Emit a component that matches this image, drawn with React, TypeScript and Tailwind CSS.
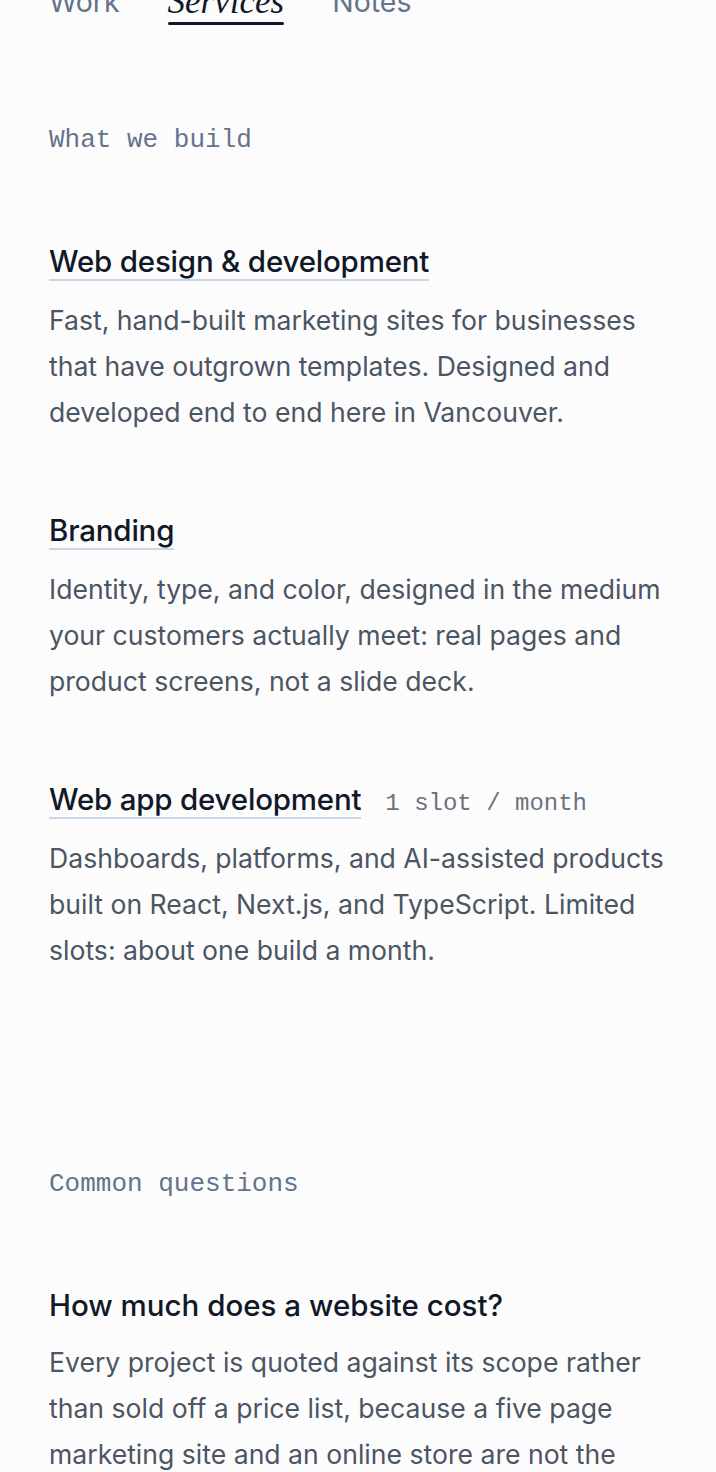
import React from "react";

const sans = "font-['Inter','Noto_Sans',sans-serif]";
const mono = "font-['Liberation_Mono','DejaVu_Sans_Mono',monospace]";

function NavItem({ label, active }: { label: string; active?: boolean }) {
  return (
    <div className="flex flex-col">
      <span
        className={
          active
            ? "font-['Liberation_Serif',serif] italic text-[35px] leading-[36px] text-[#111827]"
            : `${sans} text-[28.5px] leading-[36px] text-[#64748b]`
        }
      >
        {label}
      </span>
      <div className={`mt-[2px] h-[3px] rounded-full ${active ? "bg-[#111827]" : "bg-transparent"}`} />
    </div>
  );
}

function Service({ title, tag, body, first }: { title: string; tag?: string; body: string; first?: boolean }) {
  return (
    <div className={first ? "mt-[85px]" : "mt-[77px]"}>
      <div className="flex items-baseline gap-[24px]">
        <h3 className={`${sans} inline-block border-b-2 border-[#c9d7e6] text-[29.5px] leading-[36px] font-medium text-[#111827] tracking-[-0.2px]`}>
          {title}
        </h3>
        {tag && <span className={`${mono} text-[24px] leading-none text-[#6b7280]`}>{tag}</span>}
      </div>
      <p className={`${sans} mt-[16px] text-[26.6px] leading-[46px] text-[#4b5563]`}>{body}</p>
    </div>
  );
}

export default function App() {
  return (
    <div className="min-h-screen bg-[#fcfcfc] overflow-hidden">
      <div className="px-[49px] pr-[40px]">
        <nav className="-mt-[16px] flex items-start gap-[48px]">
          <NavItem label="Work" />
          <NavItem label="Services" active />
          <NavItem label="Notes" />
        </nav>

        <section>
          <div className={`${mono} mt-[97px] text-[26px] leading-[36px] text-[#64748b]`}>What we build</div>
          <Service
            first
            title="Web design & development"
            body="Fast, hand-built marketing sites for businesses that have outgrown templates. Designed and developed end to end here in Vancouver."
          />
          <Service
            title="Branding"
            body="Identity, type, and color, designed in the medium your customers actually meet: real pages and product screens, not a slide deck."
          />
          <Service
            title="Web app development"
            tag="1 slot / month"
            body="Dashboards, platforms, and AI-assisted products built on React, Next.js, and TypeScript. Limited slots: about one build a month."
          />
        </section>

        <section>
          <div className={`${mono} mt-[193px] text-[26px] leading-[36px] text-[#64748b]`}>Common questions</div>
          <div className="mt-[85px]">
            <h3 className={`${sans} text-[29.5px] leading-[36px] font-medium text-[#111827]`}>How much does a website cost?</h3>
            <p className={`${sans} mt-[16px] text-[26.6px] leading-[46px] text-[#4b5563]`}>
              Every project is quoted against its scope rather than sold off a price list, because a five page marketing site and an online store are not the same job, and neither is a site that needs to plug into your existing tools.
            </p>
          </div>
        </section>
      </div>
    </div>
  );
}
